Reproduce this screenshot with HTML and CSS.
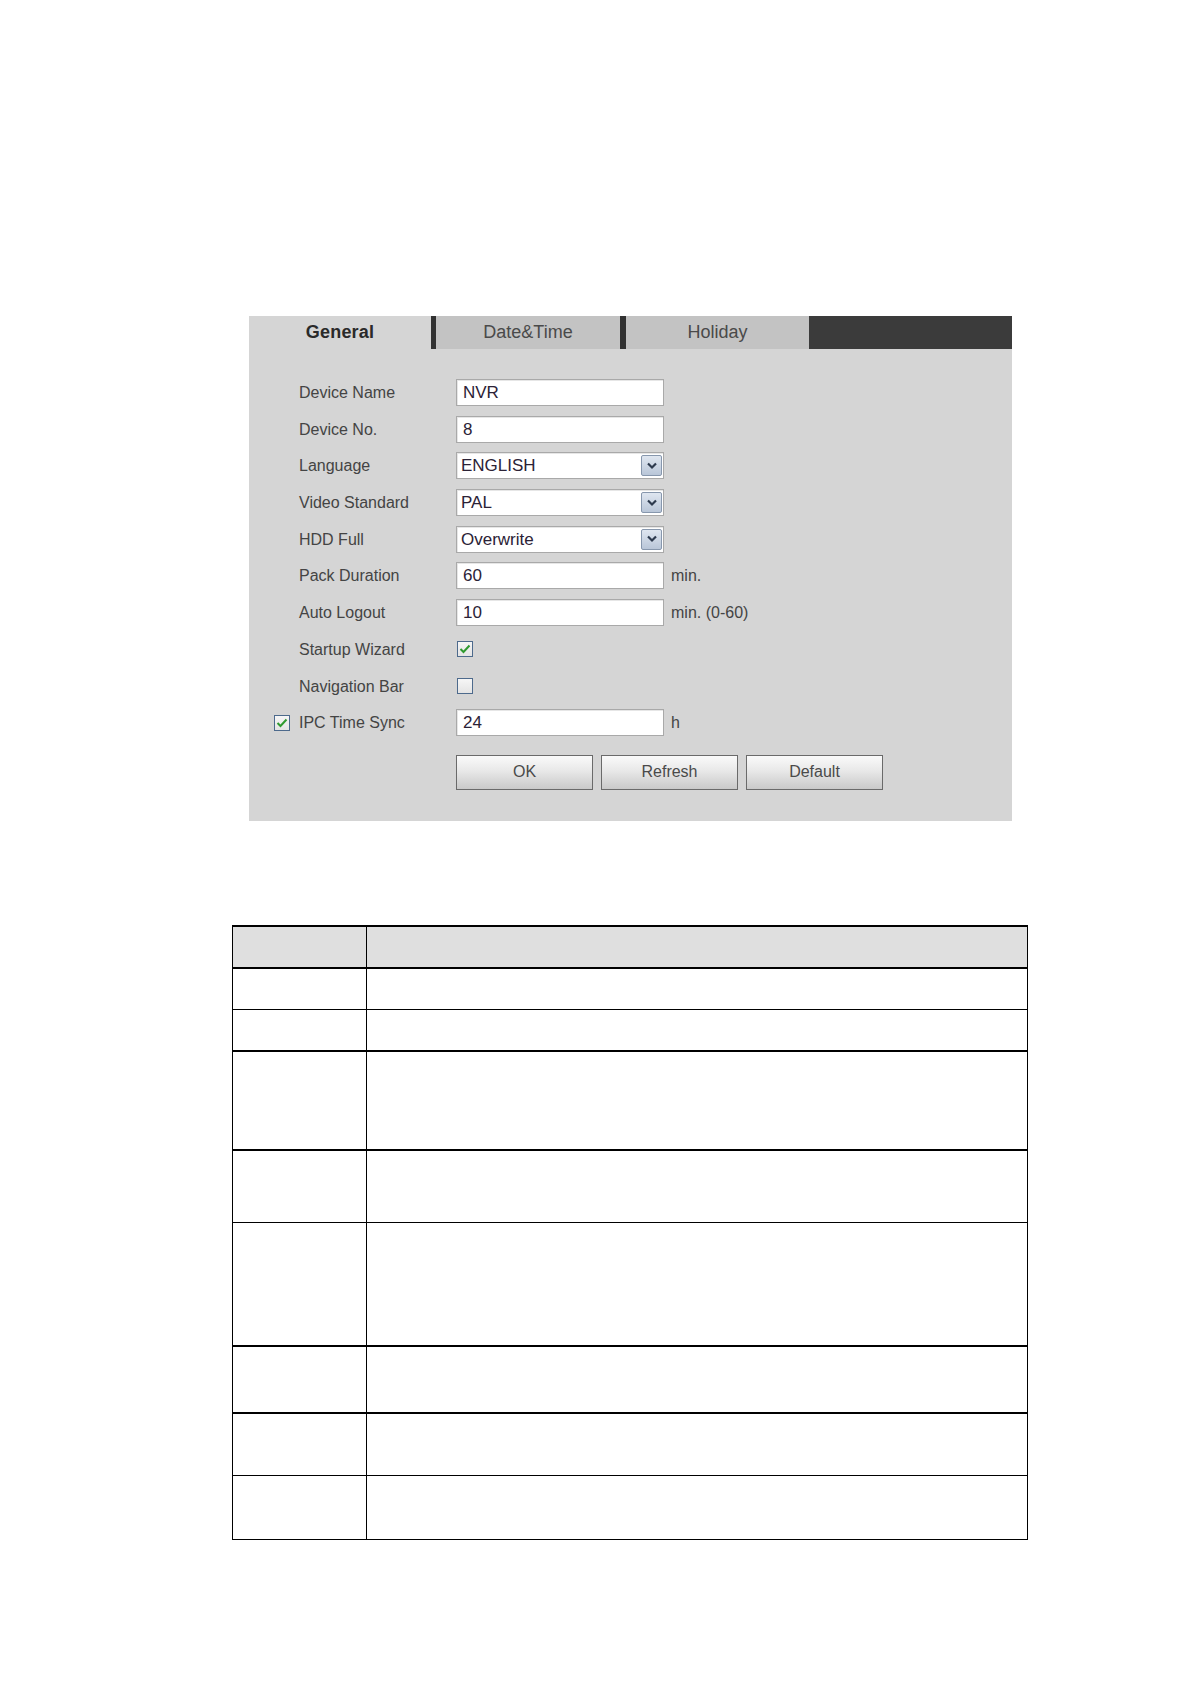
FILE: index.html
```html
<!DOCTYPE html>
<html>
<head>
<meta charset="utf-8">
<title>General</title>
<link rel="stylesheet" href="styles.css">
</head>
<body>
<div class="page">
  <div class="panel">
    <div class="tabs">
      <div class="tab tab-general">General</div>
      <div class="tab-sep"></div>
      <div class="tab tab-date">Date&amp;Time</div>
      <div class="tab-sep tab-sep-wide"></div>
      <div class="tab tab-holiday">Holiday</div>
      <div class="tab-fill"></div>
    </div>
    <div class="form">
      <div class="row"><div class="pre"></div><div class="label">Device Name</div><div class="field input"><span>NVR</span></div></div>
      <div class="row"><div class="pre"></div><div class="label">Device No.</div><div class="field input"><span>8</span></div></div>
      <div class="row"><div class="pre"></div><div class="label">Language</div><div class="field select"><span class="sel-text">ENGLISH</span><span class="arrow"><svg width="12" height="8" viewBox="0 0 12 8"><path d="M2 1.5 L6 5.5 L10 1.5" fill="none" stroke="#2d3a4e" stroke-width="2.2"/></svg></span></div></div>
      <div class="row"><div class="pre"></div><div class="label">Video Standard</div><div class="field select"><span class="sel-text">PAL</span><span class="arrow"><svg width="12" height="8" viewBox="0 0 12 8"><path d="M2 1.5 L6 5.5 L10 1.5" fill="none" stroke="#2d3a4e" stroke-width="2.2"/></svg></span></div></div>
      <div class="row"><div class="pre"></div><div class="label">HDD Full</div><div class="field select"><span class="sel-text">Overwrite</span><span class="arrow"><svg width="12" height="8" viewBox="0 0 12 8"><path d="M2 1.5 L6 5.5 L10 1.5" fill="none" stroke="#2d3a4e" stroke-width="2.2"/></svg></span></div></div>
      <div class="row"><div class="pre"></div><div class="label">Pack Duration</div><div class="field input"><span>60</span></div><div class="unit">min.</div></div>
      <div class="row"><div class="pre"></div><div class="label">Auto Logout</div><div class="field input"><span>10</span></div><div class="unit">min. (0-60)</div></div>
      <div class="row"><div class="pre"></div><div class="label">Startup Wizard</div><div class="field plain"><span class="checkbox"><svg width="12" height="10" viewBox="0 0 12 10"><path d="M1.5 5 L4.5 8 L10.5 1.5" fill="none" stroke="#2f9a2f" stroke-width="2"/></svg></span></div></div>
      <div class="row"><div class="pre"></div><div class="label">Navigation Bar</div><div class="field plain"><span class="checkbox"></span></div></div>
      <div class="row"><div class="pre"><span class="checkbox"><svg width="12" height="10" viewBox="0 0 12 10"><path d="M1.5 5 L4.5 8 L10.5 1.5" fill="none" stroke="#2f9a2f" stroke-width="2"/></svg></span></div><div class="label">IPC Time Sync</div><div class="field input"><span>24</span></div><div class="unit">h</div></div>
      <div class="buttons">
        <div class="btn">OK</div>
        <div class="btn">Refresh</div>
        <div class="btn">Default</div>
      </div>
    </div>
  </div>

  <div class="tbl">
    <div class="trow thead h42"><div class="c1"></div><div class="c2"></div></div>
    <div class="trow h42 thick"><div class="c1"></div><div class="c2"></div></div>
    <div class="trow h41"><div class="c1"></div><div class="c2"></div></div>
    <div class="trow h99 thick"><div class="c1"></div><div class="c2"></div></div>
    <div class="trow h73 thick"><div class="c1"></div><div class="c2"></div></div>
    <div class="trow h123"><div class="c1"></div><div class="c2"></div></div>
    <div class="trow h67 thick"><div class="c1"></div><div class="c2"></div></div>
    <div class="trow h63 thick"><div class="c1"></div><div class="c2"></div></div>
    <div class="trow h64"><div class="c1"></div><div class="c2"></div></div>
  </div>
</div>
</body>
</html>
```
FILE: styles.css
```css
html, body {
  margin: 0;
  padding: 0;
  background: #ffffff;
  font-family: "Liberation Sans", Arial, sans-serif;
}

.page {
  padding-top: 316px;
  padding-bottom: 145px;
}

.panel {
  margin-left: 249px;
  width: 763px;
  height: 505px;
  background: #d5d5d5;
}

.tabs {
  display: flex;
  height: 33px;
}

.tab {
  display: flex;
  align-items: center;
  justify-content: center;
  font-size: 18px;
  color: #4a4a4a;
}

.tab-general {
  width: 182px;
  font-weight: bold;
  color: #2a2a2a;
  background: #d5d5d5;
  letter-spacing: 0.2px;
}

.tab-date {
  width: 184px;
  background: #c3c3c3;
}

.tab-holiday {
  width: 183px;
  background: #c3c3c3;
}

.tab-sep {
  width: 5px;
  background: #323232;
}

.tab-sep-wide {
  width: 6px;
}

.tab-fill {
  flex: 1;
  background: #3b3b3b;
}

.form {
  padding: 30px 0 0 25px;
}

.row {
  display: flex;
  align-items: center;
  height: 27px;
  margin-bottom: 9.7px;
}

.pre {
  width: 25px;
  display: flex;
  align-items: center;
}

.label {
  width: 157px;
  font-size: 16px;
  color: #444444;
  padding-top: 1px;
}

.field {
  width: 208px;
  height: 27px;
  box-sizing: border-box;
  display: flex;
  align-items: center;
}

.input, .select {
  background: #ffffff;
  border: 1px solid #a9a9a9;
  box-shadow: inset 1px 1px 0 #e6e6e6;
  font-size: 17px;
  color: #2b2236;
}

.input span {
  padding-left: 6px;
  padding-top: 1px;
}

.select {
  padding: 2px 1px 2px 0;
}

.sel-text {
  flex: 1;
  padding-left: 4px;
  padding-top: 1px;
}

.arrow {
  width: 21px;
  height: 21px;
  box-sizing: border-box;
  border: 1px solid #8797ad;
  border-radius: 2px;
  background: linear-gradient(#dfe6f0, #b9c6d8);
  display: flex;
  align-items: center;
  justify-content: center;
}

.plain {
  padding-left: 1px;
}

.checkbox {
  width: 16px;
  height: 16px;
  box-sizing: border-box;
  border: 1px solid #4d6a8c;
  background: linear-gradient(#f6f6f6, #e4e4e4);
  display: flex;
  align-items: center;
  justify-content: center;
}

.unit {
  margin-left: 7px;
  font-size: 16px;
  color: #444444;
  padding-top: 1px;
}

.buttons {
  display: flex;
  gap: 8px;
  margin-left: 182px;
  padding-top: 9px;
}

.btn {
  width: 137px;
  height: 35px;
  box-sizing: border-box;
  border: 1px solid #6a6a6a;
  background: linear-gradient(#fafafa 0%, #e8e8e8 45%, #c9c9c9 100%);
  display: flex;
  align-items: center;
  justify-content: center;
  font-size: 16px;
  color: #4a4a4a;
}

.tbl {
  margin: 104px 0 0 232px;
  width: 796px;
  box-sizing: border-box;
  border-left: 1px solid #000;
  border-right: 1px solid #000;
  border-bottom: 1px solid #000;
}

.trow {
  display: flex;
  border-top: 1px solid #000;
  box-sizing: border-box;
}

.trow.thick {
  border-top-width: 2px;
}

.thead {
  border-top-width: 2px;
  background: #dfdfdf;
}

.c1 {
  width: 133px;
  border-right: 1px solid #000;
}

.c2 {
  flex: 1;
}

.h42 { height: 42px; }
.h41 { height: 41px; }
.h99 { height: 99px; }
.h73 { height: 73px; }
.h123 { height: 123px; }
.h67 { height: 67px; }
.h63 { height: 63px; }
.h64 { height: 64px; }
```
